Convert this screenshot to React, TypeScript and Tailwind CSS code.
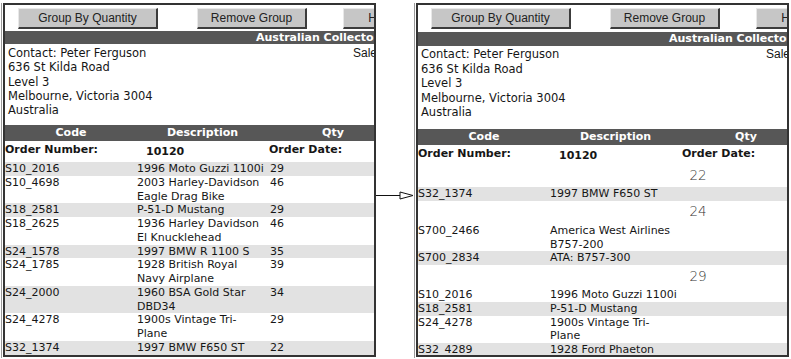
import React from 'react';

type Row = { code: string; desc: string[]; qty?: string; shade?: boolean; group?: string };

const leftRows: Row[] = [
  { code: 'S10_2016', desc: ['1996 Moto Guzzi 1100i'], qty: '29', shade: true },
  { code: 'S10_4698', desc: ['2003 Harley-Davidson', 'Eagle Drag Bike'], qty: '46' },
  { code: 'S18_2581', desc: ['P-51-D Mustang'], qty: '29', shade: true },
  { code: 'S18_2625', desc: ['1936 Harley Davidson', 'El Knucklehead'], qty: '46' },
  { code: 'S24_1578', desc: ['1997 BMW R 1100 S'], qty: '35', shade: true },
  { code: 'S24_1785', desc: ['1928 British Royal', 'Navy Airplane'], qty: '39' },
  { code: 'S24_2000', desc: ['1960 BSA Gold Star', 'DBD34'], qty: '34', shade: true },
  { code: 'S24_4278', desc: ['1900s Vintage Tri-', 'Plane'], qty: '29' },
  { code: 'S32_1374', desc: ['1997 BMW F650 ST'], qty: '22', shade: true },
];

const rightRows: Row[] = [
  { code: '', desc: [], group: '22' },
  { code: 'S32_1374', desc: ['1997 BMW F650 ST'], shade: true },
  { code: '', desc: [], group: '24' },
  { code: 'S700_2466', desc: ['America West Airlines', 'B757-200'] },
  { code: 'S700_2834', desc: ['ATA: B757-300'], shade: true },
  { code: '', desc: [], group: '29' },
  { code: 'S10_2016', desc: ['1996 Moto Guzzi 1100i'] },
  { code: 'S18_2581', desc: ['P-51-D Mustang'], shade: true },
  { code: 'S24_4278', desc: ['1900s Vintage Tri-', 'Plane'] },
  { code: 'S32_4289', desc: ['1928 Ford Phaeton'], shade: true },
];

const font = "font-['DejaVu_Sans',Verdana,sans-serif]";

const Button: React.FC<{ label: string; className: string }> = ({ label, className }) => (
  <div
    className={`h-[21px] flex items-center justify-center bg-[#c6c6c6] border-t border-l border-t-[#e8e8e8] border-l-[#e8e8e8] border-b-2 border-r-2 border-b-[#3c3c3c] border-r-[#3c3c3c] text-[12px] text-[#222] font-['Liberation_Sans',Arial,sans-serif] whitespace-nowrap ${className}`}
  >
    {label}
  </div>
);

interface PanelProps {
  rows: Row[];
  tall?: boolean;
}

const Panel: React.FC<PanelProps> = ({ rows, tall }) => (
  <div className="border-l border-[#9a9a9a] pl-[1px] h-[355px]">
    <div className={`w-[373px] h-[354px] border-2 border-[#333] overflow-hidden bg-white text-[#161616] ${font}`}>
      <div className="w-[560px]">
        {/* buttons */}
        <div className="flex mt-[3px]">
          <Button label="Group By Quantity" className="ml-[13px] w-[140px]" />
          <Button label="Remove Group" className="ml-[39px] w-[110px]" />
          <Button label="Help" className="ml-[36px] w-[76px]" />
        </div>

        {/* customer bar */}
        <div
          className={`bg-[#575757] text-white font-bold text-[11px] pl-[251px] whitespace-nowrap ${
            tall ? 'h-[14px] leading-[14px] mt-[3px]' : 'h-[13px] leading-[13px] mt-[2px]'
          }`}
        >
          Australian Collectors, Co.
        </div>

        {/* contact */}
        <div className={`flex whitespace-nowrap ${tall ? 'h-[83px] pt-[1px] leading-[14.5px]' : 'h-[81px] pt-[2px] leading-[14.25px]'}`}>
          <div className="w-[348px] pl-[3px] text-[11.5px]">
            <div>Contact: Peter Ferguson</div>
            <div>636 St Kilda Road</div>
            <div>Level 3</div>
            <div>Melbourne, Victoria 3004</div>
            <div>Australia</div>
          </div>
          <div className="text-[12px] font-['Liberation_Sans',Arial,sans-serif]">Sales Rep: Andy Fixter</div>
        </div>

        {/* header */}
        <div className="flex h-[16px] leading-[16px] bg-[#575757] text-white font-bold text-[11px] whitespace-nowrap">
          <div className="w-[132px] text-center">Code</div>
          <div className="w-[131px] text-center">Description</div>
          <div className="w-[130px] text-center">Qty</div>
          <div className="w-[120px] text-center">Price Each</div>
        </div>

        {/* order row */}
        <div className={`flex text-[11px] font-bold ${tall ? 'h-[19px]' : 'h-[21px]'}`}>
          <div className="w-[140px] leading-[14px] pt-[2px]">Order Number:</div>
          <div className="w-[123px] leading-[14px] pt-[4px] pl-[1px]">10120</div>
          <div className="leading-[14px] pt-[2px] pl-[1px]">Order Date:</div>
        </div>

        {/* items */}
        <div className="text-[11px] leading-[13.75px]">
          {rows.map((r, i) =>
            r.group ? (
              <div key={i} className="h-[23px] flex items-center justify-center text-[13.5px] text-[#333] font-light">
                {r.group}
              </div>
            ) : (
              <div key={i} className={`flex whitespace-nowrap ${r.shade ? 'bg-[#e2e2e2]' : 'bg-white'}`}>
                <div className="w-[132px]">{r.code}</div>
                <div className="w-[133px]">
                  {r.desc.map((d) => (
                    <div key={d}>{d}</div>
                  ))}
                </div>
                <div className="flex-1">{r.qty}</div>
              </div>
            )
          )}
        </div>
      </div>
    </div>
  </div>
);

export default function App() {
  return (
    <div className="flex w-[791px] h-[359px] bg-white pt-[3px] pl-[1px] overflow-hidden">
      <Panel rows={leftRows} />
      <div className="w-[38px] pt-[187px]">
        <svg width="38" height="10" viewBox="0 0 38 10">
          <line x1="0" y1="5.5" x2="24" y2="5.5" stroke="#111" strokeWidth="1" />
          <polygon points="24,2 37,5.5 24,9" fill="white" stroke="#111" strokeWidth="1" />
        </svg>
      </div>
      <Panel rows={rightRows} tall />
    </div>
  );
}
